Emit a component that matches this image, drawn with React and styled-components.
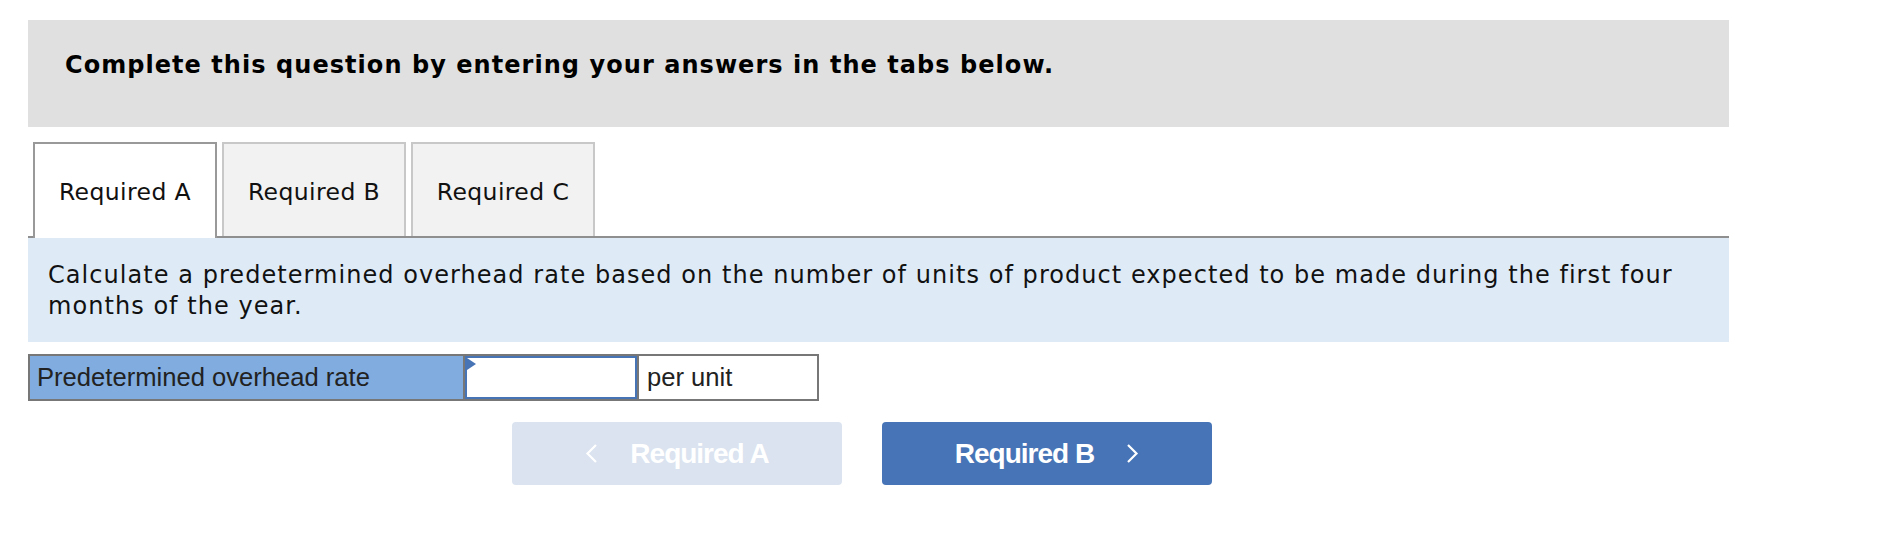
import React from "react";
import styled, { createGlobalStyle } from "styled-components";

const GlobalStyle = createGlobalStyle`
  body {
    margin: 0;
    background: #ffffff;
  }
`;

const Page = styled.div`
  width: 1701px;
  padding: 20px 28px;
`;

const Banner = styled.div`
  height: 107px;
  box-sizing: border-box;
  padding: 30px 37px 0;
  background: #e0e0e0;
  font-family: "DejaVu Sans", Verdana, sans-serif;
  font-weight: bold;
  font-size: 24px;
  letter-spacing: 1.05px;
  line-height: 30px;
  color: #000;
`;

const TabBar = styled.div`
  display: flex;
  gap: 5px;
  margin-top: 15px;
  padding-left: 5px;
  height: 94px;
  border-bottom: 2px solid #8f8f8f;
`;

const Tab = styled.div`
  width: 184px;
  box-sizing: border-box;
  height: ${(p) => (p.active ? "96px" : "94px")};
  margin-bottom: ${(p) => (p.active ? "-2px" : "0")};
  display: flex;
  align-items: center;
  justify-content: center;
  padding-top: ${(p) => (p.active ? "2px" : "4px")};
  border: 2px solid ${(p) => (p.active ? "#999999" : "#c8c8c8")};
  border-bottom: none;
  background: ${(p) => (p.active ? "#ffffff" : "#f2f2f2")};
  font-family: "DejaVu Sans", Verdana, sans-serif;
  font-size: 23.5px;
  letter-spacing: 0.4px;
  color: #111;
`;

const Instructions = styled.div`
  padding: 22px 20px 20px;
  background: #deebf7;
  font-family: "DejaVu Sans", Verdana, sans-serif;
  font-size: 24px;
  letter-spacing: 1.05px;
  line-height: 31px;
  color: #111;
`;

const AnswerRow = styled.div`
  display: flex;
  width: 791px;
  height: 47px;
  box-sizing: border-box;
  margin-top: 12px;
  border: 2px solid #777777;
  font-family: "Liberation Sans", Arial, sans-serif;
  font-size: 25.6px;
  color: #222;
`;

const Label = styled.div`
  width: 435px;
  box-sizing: border-box;
  padding-left: 7px;
  display: flex;
  align-items: center;
  background: #80acdf;
  border-right: 2px solid #777777;
`;

const InputCell = styled.div`
  position: relative;
  width: 172px;
  box-sizing: border-box;
  border: 2px solid #4674b4;
  background: #fff;
`;

const Marker = styled.span`
  position: absolute;
  left: 0;
  top: 0;
  width: 0;
  height: 0;
  border-left: 9px solid #4674b4;
  border-top: 6px solid transparent;
  border-bottom: 6px solid transparent;
`;

const Unit = styled.div`
  width: 180px;
  box-sizing: border-box;
  padding-left: 8px;
  display: flex;
  align-items: center;
  border-left: 2px solid #777777;
`;

const Nav = styled.div`
  display: flex;
  gap: 40px;
  margin-top: 21px;
  padding-left: 484px;
`;

const NavButton = styled.button`
  width: 330px;
  height: 63px;
  border: none;
  border-radius: 4px;
  display: flex;
  align-items: center;
  justify-content: center;
  gap: 32px;
  background: ${(p) => (p.disabled ? "#dae3ef" : "#4674b6")};
  color: #fff;
  font-family: "Liberation Sans", Arial, sans-serif;
  font-weight: bold;
  font-size: 28px;
  letter-spacing: -1px;
  cursor: ${(p) => (p.disabled ? "default" : "pointer")};
`;

const Chevron = ({ dir }) => (
  <svg width="13" height="19" viewBox="0 0 13 19">
    <path
      d={dir === "left" ? "M11 1 L2.5 9.5 L11 18" : "M2 1 L10.5 9.5 L2 18"}
      fill="none"
      stroke="#fff"
      strokeWidth="2.2"
    />
  </svg>
);

const tabs = ["Required A", "Required B", "Required C"];

const App = () => {
  return (
    <Page>
      <GlobalStyle />
      <Banner>Complete this question by entering your answers in the tabs below.</Banner>
      <TabBar>
        {tabs.map((t, i) => (
          <Tab key={t} active={i === 0}>
            {t}
          </Tab>
        ))}
      </TabBar>
      <Instructions>
        Calculate a predetermined overhead rate based on the number of units of product expected to be
        made during the first four months of the year.
      </Instructions>
      <AnswerRow>
        <Label>Predetermined overhead rate</Label>
        <InputCell>
          <Marker />
        </InputCell>
        <Unit>per unit</Unit>
      </AnswerRow>
      <Nav>
        <NavButton disabled>
          <Chevron dir="left" />
          Required A
        </NavButton>
        <NavButton>
          Required B
          <Chevron dir="right" />
        </NavButton>
      </Nav>
    </Page>
  );
};

export default App;
